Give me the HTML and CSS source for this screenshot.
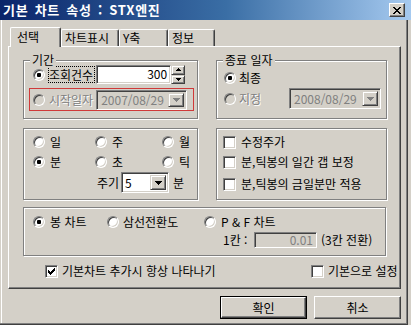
FILE: index.html
```html
<!DOCTYPE html>
<html lang="ko">
<head>
<meta charset="utf-8">
<title>기본 차트 속성</title>
<link rel="stylesheet" href="styles.css">
</head>
<body>
<div class="window">
  <div class="titlebar">
    <span class="title">기본 차트 속성 : STX엔진</span>
    <span class="close"><svg width="8" height="7" viewBox="0 0 8 7" shape-rendering="crispEdges"><path d="M0 0h2v1h-2z M6 0h2v1h-2z M1 1h2v1h-2z M5 1h2v1h-2z M2 2h4v1h-4z M3 3h2v1h-2z M2 4h4v1h-4z M1 5h2v1h-2z M5 5h2v1h-2z M0 6h2v1h-2z M6 6h2v1h-2z" fill="#000"/></svg></span>
  </div>
  <div class="client">
    <div class="tabs">
      <div class="tab active w1">선택</div>
      <div class="tab w2">차트표시</div>
      <div class="tab w3">Y축</div>
      <div class="tab w4">정보</div>
    </div>
    <div class="panel">
      <div class="row">
        <div class="group g-period">
          <span class="gtitle">기간</span>
          <div class="line line-a">
            <span class="radio checked"></span>
            <span class="label focus">조회건수</span>
            <span class="edit num">300</span>
            <span class="spin">
              <span class="sbtn"><svg width="5" height="3" viewBox="0 0 5 3" shape-rendering="crispEdges"><path d="M2 0h1v1h-1z M1 1h3v1h-3z M0 2h5v1h-5z" fill="#000"/></svg></span>
              <span class="sbtn"><svg width="5" height="3" viewBox="0 0 5 3" shape-rendering="crispEdges"><path d="M0 0h5v1h-5z M1 1h3v1h-3z M2 2h1v1h-1z" fill="#000"/></svg></span>
            </span>
          </div>
          <div class="line line-b">
            <span class="radio disabled"></span>
            <span class="label nofocus dis">시작일자</span>
            <span class="combo off date-l">
              <span class="ctext dis-text">2007/08/29</span>
              <span class="ddbtn"><svg width="7" height="4" viewBox="0 0 7 4" shape-rendering="crispEdges"><path d="M0 0h7v1h-7z M1 1h5v1h-5z M2 2h3v1h-3z M3 3h1v1h-1z" fill="#808080"/></svg></span>
            </span>
          </div>
        </div>
        <div class="group g-end">
          <span class="gtitle">종료 일자</span>
          <div class="line line-c">
            <span class="radio checked"></span>
            <span class="label2">최종</span>
          </div>
          <div class="line line-d">
            <span class="radio disabled"></span>
            <span class="label2 dis">지정</span>
            <span class="combo off date-r">
              <span class="ctext dis-text">2008/08/29</span>
              <span class="ddbtn"><svg width="7" height="4" viewBox="0 0 7 4" shape-rendering="crispEdges"><path d="M0 0h7v1h-7z M1 1h5v1h-5z M2 2h3v1h-3z M3 3h1v1h-1z" fill="#808080"/></svg></span>
            </span>
          </div>
        </div>
      </div>

      <div class="row row-2">
        <div class="group g-grid">
          <div class="grid">
            <span class="opt"><span class="radio"></span>일</span>
            <span class="opt"><span class="radio"></span>주</span>
            <span class="opt"><span class="radio"></span>월</span>
            <span class="opt"><span class="radio checked"></span>분</span>
            <span class="opt"><span class="radio"></span>초</span>
            <span class="opt"><span class="radio"></span>틱</span>
          </div>
          <div class="line cycle">
            <span class="cyc-label">주기</span>
            <span class="combo cyc-combo">
              <span class="ctext">5</span>
              <span class="ddbtn"><svg width="7" height="4" viewBox="0 0 7 4" shape-rendering="crispEdges"><path d="M0 0h7v1h-7z M1 1h5v1h-5z M2 2h3v1h-3z M3 3h1v1h-1z" fill="#000"/></svg></span>
            </span>
            <span>분</span>
          </div>
        </div>
        <div class="group g-checks">
          <div class="cline"><span class="check"></span>수정주가</div>
          <div class="cline"><span class="check"></span>분,틱봉의 일간 갭 보정</div>
          <div class="cline"><span class="check"></span>분,틱봉의 금일분만 적용</div>
        </div>
      </div>

      <div class="group g-type">
        <div class="line type-line">
          <span class="opt t1"><span class="radio checked"></span>봉 차트</span>
          <span class="opt t2"><span class="radio"></span>삼선전환도</span>
          <span class="opt t3"><span class="radio"></span>P &amp; F 차트</span>
        </div>
        <div class="line box-line">
          <span class="box-label">1칸 :</span>
          <span class="edit off box-edit dis-text">0.01</span>
          <span>(3칸 전환)</span>
        </div>
      </div>

      <div class="footer">
        <span class="fitem fleft"><span class="check checked"><svg width="7" height="7" viewBox="0 0 7 7" shape-rendering="crispEdges"><path d="M0 2h1v3h-1z M1 3h1v3h-1z M2 4h1v3h-1z M3 3h1v3h-1z M4 2h1v3h-1z M5 1h1v3h-1z M6 0h1v3h-1z" fill="#000"/></svg></span>기본차트 추가시 항상 나타나기</span>
        <span class="fitem"><span class="check"></span>기본으로 설정</span>
      </div>
    </div>
    <div class="buttons">
      <span class="btn default"><span class="btn-in">확인</span></span>
      <span class="btn"><span class="btn-in">취소</span></span>
    </div>
  </div>
</div>
</body>
</html>
```

FILE: styles.css
```css
* { box-sizing: border-box; }

html, body {
  margin: 0;
  padding: 0;
}

body {
  width: 411px;
  height: 325px;
  overflow: hidden;
  background: #d4d0c8;
  font-family: "Noto Sans CJK KR", "Noto Sans", sans-serif;
  font-size: 12px;
  line-height: 14px;
  color: #000;
}

.window {
  width: 411px;
  height: 325px;
  background: #d4d0c8;
  box-shadow: inset 1px 0 #d4d0c8, inset 2px 0 #ffffff;
}

.titlebar {
  height: 20px;
  display: flex;
  align-items: center;
  justify-content: space-between;
  padding: 0 6px 0 3px;
  background: linear-gradient(to right, #0a246a 0%, #3a6ea5 55%, #a6caf0 100%);
}

.title {
  color: #fff;
  font-weight: bold;
  font-size: 13px;
  line-height: 20px;
  letter-spacing: 0.7px;
  word-spacing: 2px;
  white-space: nowrap;
}

.close {
  width: 16px;
  height: 14px;
  display: flex;
  align-items: center;
  justify-content: center;
  background: #d4d0c8;
  border: 1px solid;
  border-color: #ffffff #404040 #404040 #ffffff;
  box-shadow: inset -1px -1px #808080;
}

.client {
  width: 408px;
  height: 305px;
  border-right: 1px solid #404040;
  border-bottom: 1px solid #404040;
  box-shadow: inset -1px -1px #808080;
  padding-top: 7px;
}

/* tabs */
.tabs {
  display: flex;
  align-items: flex-end;
  height: 19px;
  padding-left: 10px;
}

.tab {
  height: 17px;
  border-top: 1px solid #fff;
  border-left: 1px solid #fff;
  border-right: 1px solid #404040;
  box-shadow: inset -1px 0 #808080;
  border-radius: 2px 2px 0 0;
  padding-left: 3px;
  padding-top: 1px;
  line-height: 14px;
  white-space: nowrap;
}

.tab.active {
  height: 20px;
  margin-bottom: -1px;
  padding-left: 6px;
  padding-top: 2px;
  background: #d4d0c8;
  position: relative;
  z-index: 1;
}

.w1 { width: 51px; }
.w2 { width: 58px; }
.w3 { width: 49px; }
.w4 { width: 47px; }

.panel {
  margin-left: 8px;
  width: 393px;
  height: 243px;
  border-top: 1px solid #fff;
  border-left: 1px solid #fff;
  border-right: 1px solid #404040;
  border-bottom: 1px solid #404040;
  box-shadow: inset -1px -1px #808080;
  padding: 13px 0 0 14px;
}

.row {
  display: flex;
  gap: 18px;
}

.row-2 { margin-top: 9px; }

.group {
  position: relative;
  border: 1px solid #808080;
  box-shadow: inset 1px 1px #fff, 1px 1px #fff;
}

.gtitle {
  position: absolute;
  top: -8px;
  left: 6px;
  padding: 0 2px;
  background: #d4d0c8;
  line-height: 14px;
}

.line {
  display: flex;
  align-items: center;
}

/* radio */
.radio {
  flex: none;
  width: 12px;
  height: 12px;
  border-radius: 50%;
  border: 1px solid;
  border-color: #808080 #ffffff #ffffff #808080;
  box-shadow: inset 1px 1px #404040, inset -1px -1px #d4d0c8;
  background: #fff;
  display: flex;
  align-items: center;
  justify-content: center;
}

.radio.disabled { background: #d4d0c8; }

.radio.checked::after {
  content: "";
  width: 4px;
  height: 4px;
  border-radius: 1px;
  background: #000;
}

/* checkbox */
.check {
  flex: none;
  width: 13px;
  height: 13px;
  border: 1px solid;
  border-color: #808080 #ffffff #ffffff #808080;
  box-shadow: inset 1px 1px #404040, inset -1px -1px #d4d0c8;
  background: #fff;
  display: flex;
  align-items: center;
  justify-content: center;
}

.check svg { display: block; }

/* edit / combo */
.edit, .combo {
  border: 1px solid;
  border-color: #808080 #ffffff #ffffff #808080;
  box-shadow: inset 1px 1px #404040, inset -1px -1px #d4d0c8;
  background: #fff;
}

.off { background: #d4d0c8; }

.dis { color: #808080; text-shadow: 1px 1px #fff; }
.dis-text { color: #808080; }

.combo {
  display: flex;
  align-items: stretch;
  padding: 2px;
}

.ctext {
  flex: 1;
  display: flex;
  align-items: center;
  padding-left: 2px;
  white-space: nowrap;
}

.ddbtn {
  flex: none;
  width: 16px;
  display: flex;
  align-items: center;
  justify-content: center;
  background: #d4d0c8;
  border: 1px solid;
  border-color: #d4d0c8 #404040 #404040 #d4d0c8;
  box-shadow: inset 1px 1px #fff, inset -1px -1px #808080;
}

/* group 1 */
.g-period {
  width: 175px;
  height: 59px;
  padding-top: 4px;
}

.line-a {
  height: 19px;
  padding-left: 9px;
}

.line-a .radio { margin-right: 3px; }

.label {
  padding-right: 1px;
  margin-right: 1px;
  line-height: 15px;
  border: 1px dotted #000;
  white-space: nowrap;
}

.label.nofocus { border-color: transparent; }

.edit.num {
  width: 75px;
  height: 19px;
  text-align: right;
  padding: 0 3px 0 0;
  line-height: 16px;
}

.spin {
  display: flex;
  flex-direction: column;
  width: 14px;
  height: 19px;
}

.sbtn {
  flex: 1;
  display: flex;
  align-items: center;
  justify-content: center;
  border: 1px solid;
  border-color: #d4d0c8 #404040 #404040 #d4d0c8;
  box-shadow: inset 1px 1px #fff, inset -1px -1px #808080;
}

.sbtn svg { display: block; }

.line-b {
  margin: 4px 0 0 5px;
  width: 165px;
  height: 23px;
  border: 1px solid #d03a3a;
  padding-left: 3px;
}

.line-b .radio { margin-right: 3px; }

.date-l {
  width: 91px;
  height: 20px;
}

/* group 2 */
.g-end {
  width: 171px;
  height: 59px;
  padding: 9px 5px 0 7px;
}

.line-c { height: 16px; }

.label2 {
  margin-left: 3px;
  white-space: nowrap;
}

.line-d {
  margin-top: 2px;
  height: 21px;
}

.date-r {
  margin-left: auto;
  width: 92px;
  height: 21px;
}

/* group 3 */
.g-grid {
  width: 175px;
  height: 72px;
  padding: 3px 0 0 9px;
}

.grid {
  display: grid;
  grid-template-columns: 62px 67px auto;
  grid-auto-rows: 20px;
}

.opt {
  display: flex;
  align-items: center;
  white-space: nowrap;
}

.opt .radio { margin-right: 5px; }

.cycle {
  height: 21px;
  padding-left: 64px;
}

.cyc-label { margin-right: 2px; }

.cyc-combo {
  width: 48px;
  height: 21px;
  margin-right: 4px;
}

.cyc-combo .ctext { padding-left: 1px; }

/* group 4 */
.g-checks {
  width: 171px;
  height: 72px;
  padding: 3px 0 0 6px;
}

.cline {
  display: flex;
  align-items: center;
  height: 20px;
  white-space: nowrap;
}

.cline .check { margin-right: 5px; }

.cline:last-child { margin-top: 2px; }

/* group 5 */
.g-type {
  margin-top: 7px;
  width: 363px;
  height: 49px;
  padding: 6px 0 0 9px;
}

.type-line { height: 16px; }

.t1 { width: 74px; }
.t2 { width: 97px; }
.t3 .radio { margin-right: 5px; }
.t2 .radio { margin-right: 4px; }

.box-line {
  height: 17px;
  margin-top: 1px;
  padding-left: 190px;
}

.box-label { width: 31px; white-space: nowrap; }

.box-edit {
  width: 63px;
  height: 16px;
  margin-right: 4px;
  text-align: right;
  padding-right: 3px;
  line-height: 13px;
}

/* footer */
.footer {
  display: flex;
  align-items: center;
  height: 14px;
  margin-top: 8px;
  padding-left: 22px;
}

.fitem {
  display: flex;
  align-items: center;
  white-space: nowrap;
}

.fitem .check { margin-right: 4px; }

.fleft { width: 266px; }

/* buttons */
.buttons {
  display: flex;
  justify-content: flex-end;
  gap: 7px;
  margin-top: 7px;
  padding-right: 6px;
}

.btn {
  width: 87px;
  height: 23px;
  display: flex;
  border: 1px solid;
  border-color: #fff #404040 #404040 #fff;
  box-shadow: inset -1px -1px #808080;
}

.btn-in {
  flex: 1;
  display: flex;
  align-items: center;
  justify-content: center;
}

.btn.default {
  border: 1px solid #000;
  box-shadow: none;
}

.btn.default .btn-in {
  border: 1px solid;
  border-color: #fff #404040 #404040 #fff;
  box-shadow: inset -1px -1px #808080;
}
```
